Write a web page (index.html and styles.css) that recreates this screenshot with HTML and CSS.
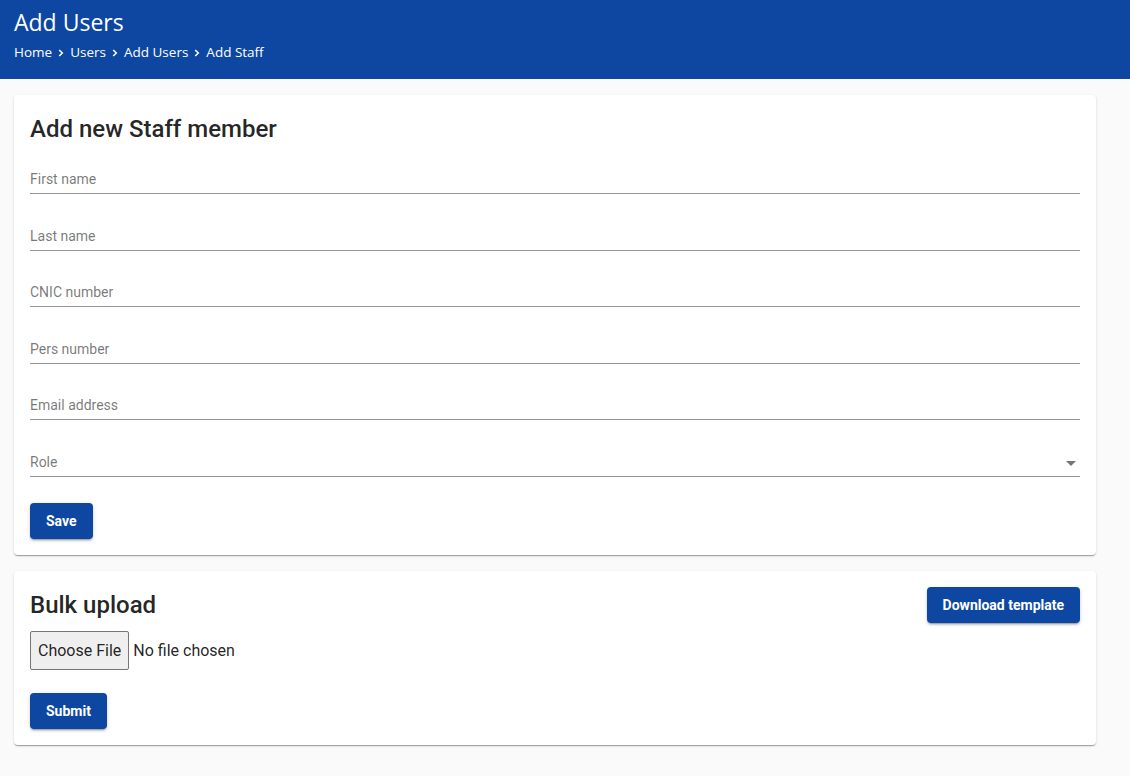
FILE: index.html
```html
<!DOCTYPE html>
<html lang="en">
<head>
<meta charset="utf-8">
<title>Add Users</title>
<link rel="stylesheet" href="styles.css">
</head>
<body>
<header class="topbar">
  <h1 class="topbar-title">Add Users</h1>
  <nav class="crumbs">
    <span>Home</span>
    <svg class="chev" viewBox="0 0 8 10" width="8" height="10"><path d="M2.2 2 L5.3 5 L2.2 8" fill="none" stroke="#fff" stroke-width="1.6"/></svg>
    <span>Users</span>
    <svg class="chev" viewBox="0 0 8 10" width="8" height="10"><path d="M2.2 2 L5.3 5 L2.2 8" fill="none" stroke="#fff" stroke-width="1.6"/></svg>
    <span>Add Users</span>
    <svg class="chev" viewBox="0 0 8 10" width="8" height="10"><path d="M2.2 2 L5.3 5 L2.2 8" fill="none" stroke="#fff" stroke-width="1.6"/></svg>
    <span>Add Staff</span>
  </nav>
</header>
<main class="content">
  <section class="card">
    <h2 class="card-title first-title">Add new Staff member</h2>
    <div class="field first"><span class="label">First name</span></div>
    <div class="field"><span class="label">Last name</span></div>
    <div class="field"><span class="label">CNIC number</span></div>
    <div class="field"><span class="label">Pers number</span></div>
    <div class="field"><span class="label">Email address</span></div>
    <div class="field select"><span class="label">Role</span><span class="caret"></span></div>
    <button class="btn save">Save</button>
  </section>
  <section class="card">
    <div class="card-head">
      <h2 class="card-title">Bulk upload</h2>
      <button class="btn">Download template</button>
    </div>
    <input class="file" type="file">
    <div><button class="btn submit">Submit</button></div>
  </section>
</main>
</body>
</html>
```
FILE: styles.css
```css
* { box-sizing: border-box; }
body {
  margin: 0;
  background: #fafafa;
  font-family: Roboto, "Liberation Sans", sans-serif;
  color: rgba(0,0,0,0.87);
}
.topbar {
  background: #0d47a1;
  color: #fff;
  height: 79px;
  padding: 7px 14px 0 14px;
  font-family: "Open Sans", "Noto Sans", sans-serif;
}
.topbar-title {
  margin: 0;
  font-size: 23px;
  font-weight: 400;
  line-height: 30px;
}
.crumbs {
  margin-top: 5px;
  display: flex;
  align-items: center;
  gap: 5px;
  font-size: 13.5px;
  line-height: 20px;
}
.chev { margin: 2px 0 0 0; }
.content {
  padding: 16px 34px 16px 14px;
  display: flex;
  flex-direction: column;
  gap: 16px;
}
.card {
  background: #fff;
  border-radius: 4px;
  padding: 16px;
  box-shadow: 0 2px 1px -1px rgba(0,0,0,0.2), 0 1px 1px 0 rgba(0,0,0,0.14), 0 1px 3px 0 rgba(0,0,0,0.12);
}
.card-title {
  margin: 0;
  font-size: 24px;
  font-weight: 500;
  line-height: 32px;
  letter-spacing: 0;
}
.first-title { padding-top: 2px; }
.field {
  height: 50px;
  margin-top: 6.5px;
  border-bottom: 1px solid rgba(0,0,0,0.42);
  display: flex;
  align-items: flex-end;
  justify-content: space-between;
  padding-bottom: 4px;
}
.field.first { margin-top: 0; height: 49px; }
.label {
  font-size: 14px;
  line-height: 20px;
  color: rgba(0,0,0,0.54);
}
.caret {
  width: 0;
  height: 0;
  border-left: 5px solid transparent;
  border-right: 5px solid transparent;
  border-top: 5px solid #757575;
  margin: 0 4px 6px 0;
}
.btn {
  font-family: Roboto, "Liberation Sans", sans-serif;
  font-size: 14px;
  font-weight: 700;
  color: #fff;
  background: #0d47a1;
  border: none;
  border-radius: 4px;
  height: 36px;
  padding: 0 16px;
  box-shadow: 0 3px 1px -2px rgba(0,0,0,0.2), 0 2px 2px 0 rgba(0,0,0,0.14), 0 1px 5px 0 rgba(0,0,0,0.12);
}
.save { margin-top: 26px; }
.card-head {
  display: flex;
  justify-content: space-between;
  align-items: center;
}
.file {
  display: block;
  margin-top: 8px;
  font-family: Roboto, "Liberation Sans", sans-serif;
  font-size: 16px;
  color: rgba(0,0,0,0.87);
}
.file::file-selector-button {
  font-family: Roboto, "Liberation Sans", sans-serif;
  font-size: 16px;
  padding: 9px 7px;
  margin-right: 4px;
  border: 1px solid #767676;
  border-radius: 2px;
  background: #efefef;
  color: rgba(0,0,0,0.87);
}
.submit { margin-top: 23px; }
```
